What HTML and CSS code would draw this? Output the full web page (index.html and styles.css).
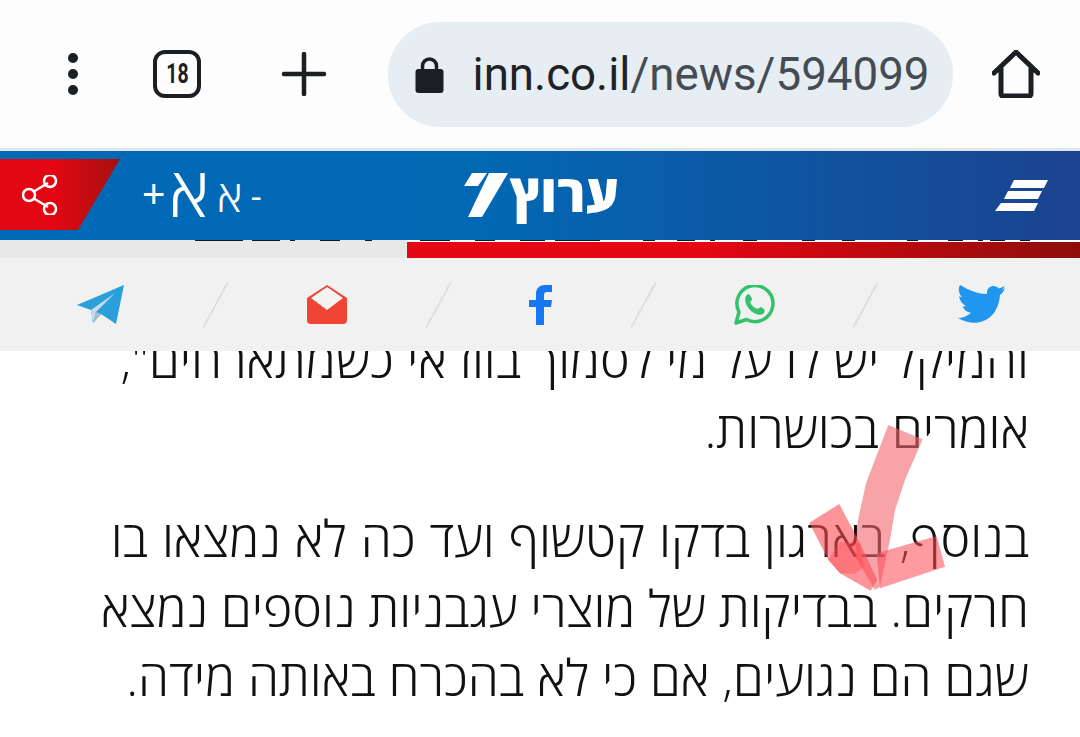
FILE: index.html
```html
<!DOCTYPE html>
<html lang="he">
<head>
    <meta charset="UTF-8">
    <meta name="viewport" content="width=device-width, initial-scale=1.0">
    <title>inn.co.il/news/594099</title>
    <link rel="stylesheet" href="styles.css">
</head>
<body>
    <div class="screen">
        <div class="toolbar">
            <div class="tool tool-menu">
                <svg width="12" height="44" viewBox="0 0 12 44"><circle cx="6" cy="6" r="5"/><circle cx="6" cy="22" r="5"/><circle cx="6" cy="38" r="5"/></svg>
            </div>
            <div class="tool tool-tabs"><span class="tab-count"><span class="tab-digits">18</span></span></div>
            <div class="tool tool-plus">
                <svg width="44" height="44" viewBox="0 0 44 44"><path d="M2 22H42M22 2V42" fill="none" stroke="#1b1e22" stroke-width="4.500" stroke-linecap="round"/></svg>
            </div>
            <div class="urlbar">
                <svg class="lock" width="29" height="37" viewBox="0 0 29 37"><path d="M7.500 15V10a7 7 0 0 1 14 0v5" fill="none" stroke="#1b1e22" stroke-width="3.500"/><rect x="0.500" y="13" width="28" height="24" rx="3"/></svg>
                <span class="url"><span class="url-host">inn.co.il</span>/news/594099</span>
            </div>
            <div class="tool tool-home">
                <svg width="48" height="48" viewBox="0 0 48 48"><path d="M2 23L24 2L46 23M9 18V44a2 2 0 0 0 2 2H37a2 2 0 0 0 2-2V18" fill="none" stroke="#1b1e22" stroke-width="5" stroke-linecap="round" stroke-linejoin="round"/></svg>
            </div>
        </div>

        <header class="site-header">
            <div class="share-tab">
                <svg width="36" height="40" viewBox="0 0 36 40"><path d="M11 17L26 8M11 23L26 32" stroke="#fff" stroke-width="2.500"/><g fill="none" stroke="#fff" stroke-width="2.500"><circle cx="7" cy="20" r="6"/><circle cx="28" cy="6" r="6"/><circle cx="28" cy="34" r="6"/></g></svg>
            </div>
            <div class="font-size">
                <span class="size-plus">+</span>
                <span class="size-big">א</span>
                <span class="size-small">א</span>
                <span class="size-minus">-</span>
            </div>
            <div class="logo">
                <svg width="44" height="46" viewBox="0 0 44 46"><path d="M8 0H23L14 13H0ZM25 0H44L18 44H4Z" fill="#fff"/></svg>
                <span class="logo-text">ערוץ</span>
            </div>
            <svg class="burger" width="54" height="32" viewBox="0 0 54 32"><path d="M19 0H53L49 8H15ZM13 11H47L43 19H9ZM6 23H43L39 31H0Z" fill="#fff"/></svg>
        </header>

        <div class="cut-line">
            <svg width="1080" height="2" viewBox="0 0 1080 2"><path d="M195 0H243V1H195ZM252 0H280V1H252ZM290 0H295V1H290ZM320 0H340V1H320ZM365 0H372V1H365ZM420 0H450V1H420ZM475 0H495V1H475ZM520 0H545V1H520ZM555 0H600V1H555ZM643 0H655V1H643ZM677 0H695V1H677ZM710 0H715V1H710ZM743 0H757V1H743ZM802 0H815V1H802ZM842 0H855V1H842ZM907 0H918V1H907ZM948 0H963V1H948ZM978 0H983V1H978ZM990 0H1005V1H990ZM1020 0H1030V1H1020Z" fill="#14161c"/></svg>
        </div>
        <div class="ticker"><div class="ticker-bar"></div></div>

        <div class="share-bar">
            <svg class="share-icon" width="48" height="40" viewBox="0 0 48 40"><path d="M0 20L47 0L39 39L24 29L16 38L14 25Z" fill="#2a9fdc"/><path d="M14 25L38 8L19 27L16 38Z" fill="#c8dcea"/><path d="M19 27L24 29L16 38Z" fill="#a9bfce"/></svg>
            <span class="sep"></span>
            <svg class="share-icon" width="42" height="40" viewBox="0 0 42 40"><path d="M1 13L21 0L41 13V35a4 4 0 0 1-4 4H5a4 4 0 0 1-4-4Z" fill="#ee4535"/><path d="M21 2L37 13L21 25L5 13Z" fill="#f7f3f2"/></svg>
            <span class="sep"></span>
            <svg class="share-icon" width="24" height="40" viewBox="0 0 24 40"><path d="M7 40V22H0V15H7V9C7 3 11 0 16 0H23V7H18C15.500 7 15 8.500 15 10V15H23L22 22H15V40Z" fill="#1877f2"/></svg>
            <span class="sep"></span>
            <svg class="share-icon" width="41" height="40" viewBox="0 0 41 40"><path d="M2 38L5 27A18 18 0 1 1 12.500 34.500Z" fill="none" stroke="#33c26b" stroke-width="3.500" stroke-linejoin="round"/><path d="M12 11C13 9 15 9 16 10L18 14C18 15 17 16 16 17C17 20 20 23 24 24C25 23 26 22 27 22L30 24C31 25 31 27 29 29C26 31 20 29 16 25C12 21 10 15 12 11Z" fill="#33c26b"/></svg>
            <span class="sep"></span>
            <svg class="share-icon share-twitter" width="47" height="40" viewBox="0 0 47 40"><path d="M47 3C45 4.500 44 5 43 5.500C45 4.500 46 2.500 46.500 1C44.500 2 43 3 41 3.500C37 -1.500 28 1 29 9C21 9 12 6 2 0C-0.500 4 1 9 4 12C3 12 2 11.500 1 11.500C2 16 4 19 8 21C7 21.500 5.500 21.500 4.500 21C6 25 9 27 13 28C9 31 5 33 0 33C18 44 40 36 42 10C44 8.500 46 6 47 3Z" fill="#2196f0"/></svg>
        </div>

        <main class="article">
            <p class="para">והמיקל יש לו על מי לסמוך בווז אי כשמתארחים",<br>אומרים בכושרות.</p>
            <p class="para"><span class="wide-line">בנוסף, בארגון בדקו קטשוף ועד כה לא נמצאו בו</span><br>חרקים. בבדיקות של מוצרי עגבניות נוספים נמצא<br>שגם הם נגועים, אם כי לא בהכרח באותה מידה.</p>
        </main>

        <svg class="check-mark" width="170" height="190" viewBox="0 0 510 570">
            <path d="M325 45L428 88L375 210L345 300L330 390L300 530L285 540L226 440L232 340L258 220Z" fill="#f4656c" opacity="0.6"/>
            <path d="M88 338L178 282L240 400L292 510L272 542L180 490L145 450Z" fill="#fb4d55" opacity="0.6"/>
            <path d="M180 395L240 400L252 470L225 492L180 490L145 450Z" fill="#ff3b44" opacity="0.35"/>
            <path d="M290 430L470 378L495 470L300 535Z" fill="#fb4d55" opacity="0.56"/>
        </svg>
    </div>
</body>
</html>
```

FILE: styles.css
```css
* {
    margin: 0;
    padding: 0;
    box-sizing: border-box;
}

html, body {
    width: 1080px;
    height: 737px;
    overflow: hidden;
    background-color: #fff;
}

.screen {
    position: relative;
    width: 1080px;
    height: 737px;
    overflow: hidden;
    font-family: "Open Sans", "Liberation Sans", sans-serif;
}

.toolbar {
    display: flex;
    align-items: center;
    height: 151px;
    padding-left: 21px;
    background-color: #fdfdfe;
    border-bottom: 3px solid #dfe7ee;
}

.tool {
    display: flex;
    justify-content: center;
    align-items: center;
    fill: #1b1e22;
}

.tool-menu {
    width: 105px;
}

.tool-tabs {
    width: 104px;
}

.tool-plus {
    width: 150px;
}

.tool-home {
    width: 128px;
}

.tab-count {
    display: flex;
    justify-content: center;
    align-items: center;
    width: 48px;
    height: 48px;
    border: 4.500px solid #1b1e22;
    border-radius: 12px;
    color: #1b1e22;
}

.tab-digits {
    font-family: Roboto, sans-serif;
    font-size: 27px;
    font-weight: 700;
    transform: scaleX(0.72);
}

.urlbar {
    display: flex;
    align-items: center;
    flex: none;
    width: 565px;
    height: 105px;
    margin-left: 9px;
    padding-left: 27px;
    background-color: #e6edf3;
    border-radius: 52px;
}

.lock {
    fill: #1b1e22;
    flex: none;
}

.url {
    margin-left: 29px;
    font-family: Roboto, sans-serif;
    font-size: 45.700px;
    color: #454c54;
    white-space: nowrap;
}

.url-host {
    color: #1f2328;
}

.site-header {
    position: relative;
    display: flex;
    align-items: center;
    height: 89px;
    background: linear-gradient(90deg, #0069b6 0%, #0268b4 45%, #1b4390 100%);
}

.share-tab {
    display: flex;
    align-items: center;
    flex: none;
    width: 120px;
    height: 71px;
    margin-top: -2px;
    padding-left: 22px;
    background: linear-gradient(90deg, #e30613 0%, #e30613 45%, #a5120f 100%);
    clip-path: polygon(0 0, 100% 0, 65% 100%, 0 100%);
}

.font-size {
    display: flex;
    align-items: center;
    height: 60px;
    margin-left: 22px;
    color: #fff;
    font-weight: 300;
}

.size-plus {
    font-family: "Liberation Sans", sans-serif;
    font-size: 40px;
    line-height: 48px;
    margin-top: -4px;
}

.size-big {
    margin-top: -12px;
    margin-left: 4px;
    font-size: 70px;
    line-height: 60px;
}

.size-small {
    margin-top: -2px;
    margin-left: 8px;
    font-size: 44px;
    line-height: 44px;
}

.size-minus {
    margin-left: 8px;
    font-family: "Liberation Sans", sans-serif;
    font-size: 34px;
    line-height: 40px;
}

.logo {
    display: flex;
    align-items: center;
    margin-left: auto;
    gap: 2px;
}

.logo-text {
    margin-bottom: 8px;
    font-size: 52px;
    font-weight: 800;
    line-height: 60px;
    color: #fff;
}

.burger {
    margin-left: 376px;
    margin-right: 31px;
    flex: none;
}

.cut-line {
    display: flex;
    height: 2px;
    overflow: hidden;
    background: linear-gradient(90deg, #e8e8e8 407px, #fff 407px);
}

.ticker {
    display: flex;
    justify-content: flex-end;
    height: 16px;
    background-color: #e8e8e8;
}

.ticker-bar {
    width: 673px;
    background: linear-gradient(90deg, #e30613 0%, #e30613 45%, #8e0e0a 100%);
}

.share-bar {
    position: relative;
    z-index: 1;
    display: flex;
    align-items: center;
    gap: 78px;
    height: 93px;
    padding-left: 77px;
    background-color: #f1f1f1;
}

.share-icon {
    flex: none;
}

.share-twitter {
    margin-left: 2px;
}

.sep {
    flex: none;
    width: 25px;
    height: 46px;
    background: linear-gradient(to bottom right, transparent calc(50% - 1px), #dfdfdf calc(50% - 1px), #dfdfdf calc(50% + 1px), transparent calc(50% + 1px));
}

.article {
    margin-top: -26px;
    padding-right: 51px;
    direction: rtl;
    font-size: 50px;
    font-weight: 300;
    line-height: 69.500px;
    color: #111;
    white-space: nowrap;
}

.wide-line {
    word-spacing: 1px;
}

.para {
    margin-bottom: 40px;
}

.check-mark {
    position: absolute;
    left: 780px;
    top: 410px;
}
```
